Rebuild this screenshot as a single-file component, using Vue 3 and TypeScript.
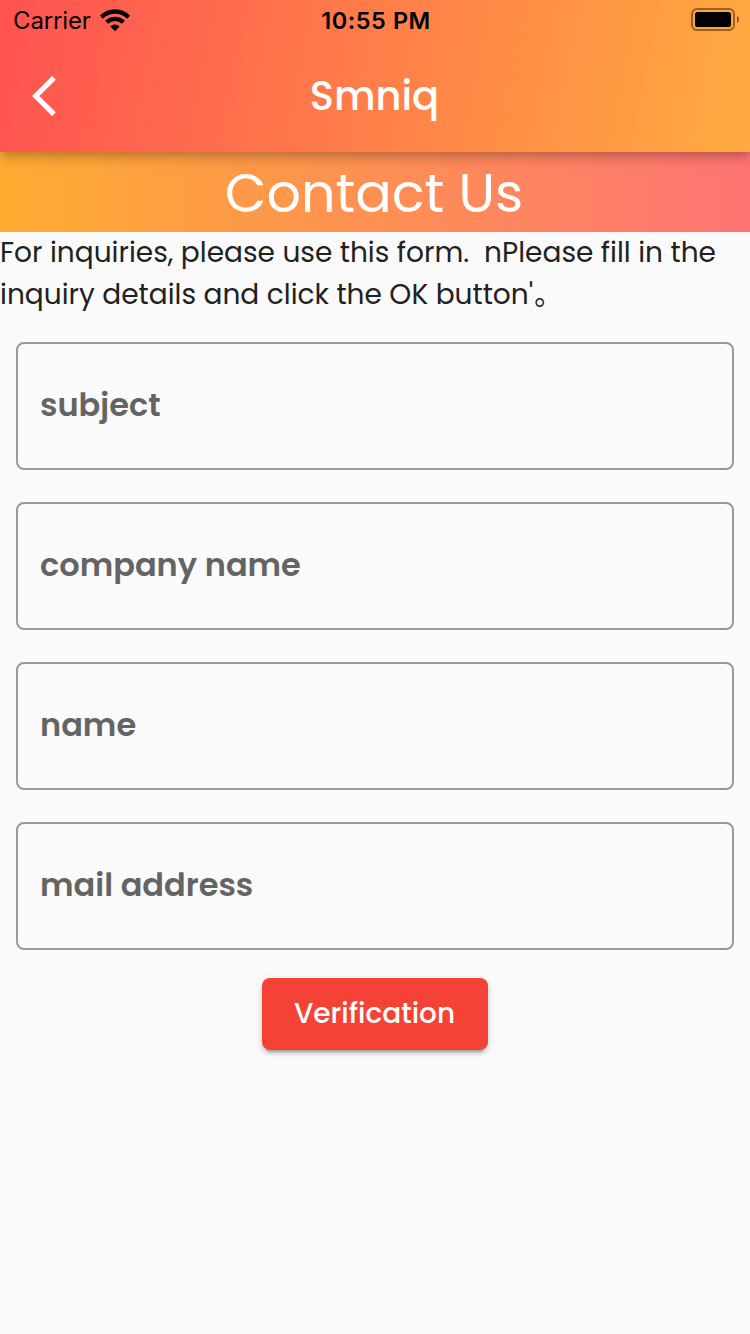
<script setup lang="ts">
interface Field {
  id: string
  label: string
}

const fields: Field[] = [
  { id: 'subject', label: 'subject' },
  { id: 'company', label: 'company name' },
  { id: 'name', label: 'name' },
  { id: 'mail', label: 'mail address' },
]
</script>

<template>
  <div class="screen">
    <header class="app-bar">
      <div class="status">
        <div class="carrier">
          <span>Carrier</span>
          <svg class="wifi" width="30" height="23" viewBox="0 0 30 23">
            <g fill="none" stroke="#000" stroke-width="4.3">
              <path d="M1.4 8.1A19.3 19.3 0 0 1 28.6 8.1" />
              <path d="M6.6 13.3A12 12 0 0 1 23.4 13.3" />
            </g>
            <path d="M10.4 17.4A6.8 6.8 0 0 1 19.6 17.4L15 22.2Z" />
          </svg>
        </div>
        <span class="clock">10:55 PM</span>
        <svg class="battery" width="48" height="23" viewBox="0 0 48 23">
          <rect x="1" y="1" width="42" height="21" rx="5" fill="none" stroke="#000" stroke-opacity=".4" stroke-width="2" />
          <rect x="4" y="4" width="36" height="15" rx="2.6" />
          <path d="M46 8Q48 8.8 48 11.5T46 15Z" fill-opacity=".45" />
        </svg>
      </div>
      <div class="toolbar">
        <svg class="back" width="24" height="40" viewBox="0 0 24 40">
          <path d="M21.9 1.8L3.7 20L21.9 38.2" fill="none" stroke="#fff" stroke-width="5.2" />
        </svg>
        <h1 class="title">Smniq</h1>
      </div>
    </header>
    <main>
      <h2 class="banner">Contact Us</h2>
      <p class="intro">
        For inquiries, please use this form.&nbsp; nPlease fill in the<br>
        inquiry details and click the OK button'<span class="stop">。</span>
      </p>
      <form class="form" @submit.prevent>
        <label v-for="f in fields" :key="f.id" class="field">{{ f.label }}</label>
        <button class="submit" type="submit">Verification</button>
      </form>
    </main>
  </div>
</template>

<style>
body {
  margin: 0;
  background: #fafafa;
}
</style>

<style scoped>
.screen {
  width: 750px;
  height: 1334px;
  overflow: hidden;
  background: #fafafa;
  font-family: Poppins, Inter, "Noto Sans CJK JP", sans-serif;
  color: #212121;
}
.app-bar {
  height: 152px;
  position: relative;
  background: linear-gradient(101.46deg, #ff5252, #ffab40);
  box-shadow: 0 4px 8px -2px rgba(0, 0, 0, .16), 0 8px 10px rgba(0, 0, 0, .08), 0 2px 20px rgba(0, 0, 0, .1);
}
.status {
  display: grid;
  grid-template-columns: 1fr auto 1fr;
  align-items: start;
  height: 40px;
  padding: 0 11px 0 13px;
  color: #000;
  font-family: Inter, sans-serif;
  font-size: 24px;
  line-height: 42px;
}
.carrier {
  display: flex;
  align-items: flex-start;
  gap: 9px;
  letter-spacing: -.15px;
}
.wifi {
  margin-top: 9px;
}
.clock {
  font-weight: 600;
  font-size: 23.5px;
  letter-spacing: .55px;
}
.battery {
  justify-self: end;
  margin-top: 8px;
}
.toolbar {
  display: grid;
  grid-template-columns: 100px 1fr 100px;
  align-items: center;
  height: 112px;
}
.back {
  margin-left: 32px;
}
.title {
  margin: 0;
  padding-right: 1px;
  color: #fff;
  text-align: center;
  font-size: 40px;
  font-weight: 500;
}
.banner {
  margin: 0;
  box-sizing: border-box;
  height: 80px;
  padding-right: 2px;
  line-height: 82px;
  background: linear-gradient(90deg, #feac32, #fe7474);
  color: #fff;
  text-align: center;
  font-size: 54px;
  font-weight: 400;
}
.intro {
  margin: 0;
  font-size: 28px;
  line-height: 42px;
  white-space: nowrap;
}
.stop {
  display: inline-block;
  line-height: 1;
  height: 28px;
  transform: translate(1px, 1px);
}
.form {
  display: flex;
  flex-direction: column;
  gap: 32px;
  padding: 26px 16px 0;
}
.field {
  display: flex;
  align-items: center;
  box-sizing: border-box;
  height: 128px;
  padding: 0 22px 2px;
  border: 2px solid #999;
  border-radius: 8px;
  color: #646464;
  font-size: 32px;
  font-weight: 600;
}
.submit {
  align-self: center;
  width: 226px;
  height: 72px;
  margin-top: -4px;
  padding: 0 1px 0 0;
  border: 0;
  border-radius: 8px;
  background: #f44336;
  box-shadow: 0 6px 2px -4px rgba(0, 0, 0, .2), 0 4px 4px rgba(0, 0, 0, .12), 0 2px 8px rgba(0, 0, 0, .1);
  color: #fff;
  font: inherit;
  font-size: 28px;
  font-weight: 500;
}
</style>
